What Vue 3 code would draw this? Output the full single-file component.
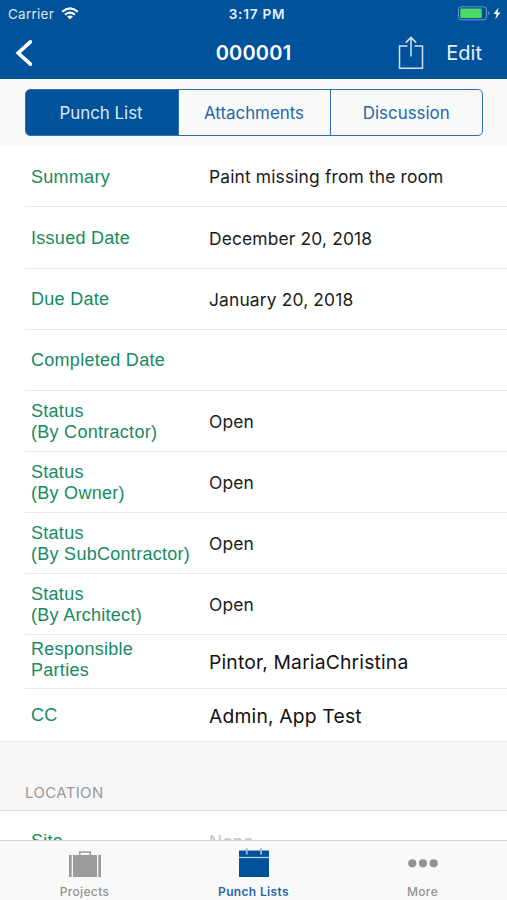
<script setup>
const segments = ['Punch List', 'Attachments', 'Discussion']
const rows = [
  { label: ['Summary'], value: 'Paint missing from the room', kind: 'wide' },
  { label: ['Issued Date'], value: 'December 20, 2018', kind: 'wide' },
  { label: ['Due Date'], value: 'January 20, 2018', kind: 'wide' },
  { label: ['Completed Date'], value: '', kind: 'wide' },
  { label: ['Status', '(By Contractor)'], value: 'Open', kind: 'status-row' },
  { label: ['Status', '(By Owner)'], value: 'Open', kind: 'status-row' },
  { label: ['Status', '(By SubContractor)'], value: 'Open', kind: 'status-row' },
  { label: ['Status', '(By Architect)'], value: 'Open', kind: 'status-row' },
  { label: ['Responsible', 'Parties'], value: 'Pintor, MariaChristina', kind: 'people' },
  { label: ['CC'], value: 'Admin, App Test', kind: 'people cc' },
]
</script>

<template>
  <div class="screen">
    <header>
      <div class="status">
        <div class="carrier">
          <span>Carrier</span>
          <svg width="18" height="13" viewBox="0 0 18 13" fill="none" stroke="#fff" stroke-width="2.1">
            <path d="M1.2 4.8Q9-2 16.8 4.8M4 7.6Q9 3.6 14 7.6" />
            <path d="M6.1 9.6Q9 7.2 11.9 9.6L9 12.5Z" fill="#fff" stroke="none" />
          </svg>
        </div>
        <div class="time">3:17 PM</div>
        <div class="battery">
          <svg width="44" height="15" viewBox="0 0 44 15">
            <rect x=".5" y=".8" width="28" height="13" rx="3" fill="none" stroke="#6b9bc7" />
            <rect x="2.2" y="2.5" width="21.5" height="9.6" rx="1.4" fill="#4cd964" />
            <path d="M30.2 5.2q2.6 2.1 0 4.2z" fill="#6b9bc7" />
            <path d="M40.5 1.5 35.5 8h3l-1.2 5.2L42.5 6.5h-3z" fill="#fff" />
          </svg>
        </div>
      </div>
      <nav>
        <svg class="back" width="18" height="28" viewBox="0 0 18 28" fill="none" stroke="#fff" stroke-width="3.6">
          <path d="M15.4 2.8 3.2 14l12.2 11.2" stroke-linecap="round" />
        </svg>
        <h1>000001</h1>
        <div class="actions">
          <svg width="26" height="34" viewBox="0 0 26 34" fill="none" stroke="#d3e2f0" stroke-width="1.5">
            <path d="M9.5 10H1.5v22.3h23V10h-8M13 20.5V1.5M7.8 6.6 13 1.4l5.2 5.2" />
          </svg>
          <span>Edit</span>
        </div>
      </nav>
    </header>

    <div class="segbar">
      <div class="segments">
        <div v-for="(s, i) in segments" :key="s" class="segment" :class="{ active: i === 0 }">{{ s }}</div>
      </div>
    </div>

    <main>
      <div v-for="(r, i) in rows" :key="i" class="row" :class="r.kind">
        <div class="label"><div v-for="l in r.label" :key="l">{{ l }}</div></div>
        <div class="value">{{ r.value }}</div>
      </div>
      <div class="section">LOCATION</div>
      <div class="row wide partial">
        <div class="label">Site</div>
        <div class="value none">None</div>
      </div>
    </main>

    <footer>
      <div class="tab">
        <svg width="34" height="30" viewBox="0 0 34 30" fill="#9b9b9b">
          <path d="M11 6V2.3h12V6h-1.5V3.8h-9V6zM5 6h24v22H5zM1 6h2.7v22H1zM30.3 6H33v22h-2.7z" />
        </svg>
        <span>Projects</span>
      </div>
      <div class="tab on">
        <svg width="34" height="30" viewBox="0 0 34 30">
          <path d="M2 2.5h30V29H2z" fill="#00529b" />
          <path d="M2 9.5h30" stroke="#b5cfe8" stroke-width="1.3" />
          <path d="M9.8 .5v6M24 .5v6" stroke="#8db7df" stroke-width="2" />
        </svg>
        <span>Punch Lists</span>
      </div>
      <div class="tab">
        <svg width="34" height="30" viewBox="0 0 34 30" fill="#929292">
          <circle cx="6.3" cy="14.3" r="4.1" /><circle cx="17" cy="14.3" r="4.1" /><circle cx="27.7" cy="14.3" r="4.1" />
        </svg>
        <span>More</span>
      </div>
    </footer>
  </div>
</template>

<style>
body { margin: 0; }
</style>
<style scoped>
* { box-sizing: border-box; }
svg { display: block; flex: none; }
.screen { width: 507px; height: 900px; display: flex; flex-direction: column; overflow: hidden; background: #fff; font-family: Inter, "Liberation Sans", sans-serif; white-space: nowrap; }
header { height: 79px; flex: none; background: #00529b; color: #fff; }
.status { height: 27px; display: grid; grid-template-columns: 1fr auto 1fr; align-items: center; padding: 0 5px 0 8px; font-size: 13.5px; }
.carrier { display: flex; align-items: center; gap: 7px; color: #dce8f3; letter-spacing: .25px; }
.time { font-weight: 600; letter-spacing: .75px; padding-left: 4px; color: #e8f0f7; font-size: 13.6px; }
.battery { display: flex; justify-content: flex-end; }
nav { height: 52px; display: grid; grid-template-columns: 1fr auto 1fr; align-items: center; padding: 0 25px 0 15px; }
h1 { margin: 0; font-size: 20px; font-weight: 600; letter-spacing: .2px; padding-left: 10px; }
.actions { display: flex; justify-content: flex-end; align-items: center; gap: 22px; font-size: 20px; color: #e8f0f7; }
.segbar { height: 67.4px; flex: none; padding: 10px 25px 0; background: #f9f9f9; }
.segments { width: 457.5px; height: 47px; display: grid; grid-template-columns: 152px 152px 1fr; border: 1px solid #2d70ad; border-radius: 5px; overflow: hidden; }
.segment { display: flex; align-items: center; justify-content: center; font-size: 16.9px; color: #2367a8; border-left: 1px solid #2d70ad; }
.segment.active { background: #00529b; color: #dce8f3; border-left: 0; padding-right: 2px; }
.segment:nth-child(2) { padding-right: 1px; }
main { flex: 1; min-height: 0; overflow: hidden; }
.row { height: 61.1px; margin-left: 25px; padding-left: 6px; display: grid; grid-template-columns: 178px 1fr; align-items: center; border-bottom: 1px solid #e9e9e9; }
.label { font: 18px/21px "Liberation Sans", sans-serif; letter-spacing: .28px; color: #168b61; padding-top: 2px; }
.value { font-size: 17.4px; letter-spacing: .15px; color: #1b1b1b; padding-top: 1px; }
.people { height: 54px; }
.people .label { margin-top: -5px; }
.people .value { font-size: 19.3px; letter-spacing: .18px; color: #111; }
.cc { height: 53px; margin-left: 0; padding-left: 31px; }
.cc .label { margin-top: -2px; }
.section { height: 69.3px; padding: 39px 25px 0; background: #f7f7f7; border-bottom: 1px solid #dedede; font-size: 15px; letter-spacing: .35px; line-height: 24px; color: #999; }
.partial .label, .partial .value { padding-top: 0; }
.value.none { color: #c4c4c4; }
footer { height: 60px; flex: none; border-top: 1px solid #d4d4d4; background: #f9f9f9; display: grid; grid-template-columns: repeat(3, 1fr); }
.tab { display: flex; flex-direction: column; align-items: center; padding-top: 8px; color: #929292; font-size: 12px; font-weight: 500; letter-spacing: .35px; line-height: 16px; }
.tab span { margin-top: 5px; }
.on { color: #2367a8; font-weight: 600; }
.on svg { margin-top: -1px; margin-bottom: 1px; }
</style>
